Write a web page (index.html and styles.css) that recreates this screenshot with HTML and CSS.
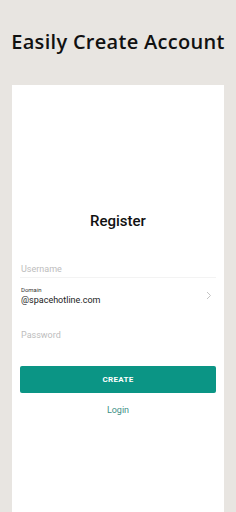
FILE: index.html
```html
<!DOCTYPE html>
<html lang="en">
<head>
  <meta charset="UTF-8">
  <meta name="viewport" content="width=device-width, initial-scale=1.0">
  <title>Easily Create Account</title>
  <link rel="stylesheet" href="styles.css">
</head>
<body>
  <div class="page">
    <header class="top">
      <h1 class="title">Easily Create Account</h1>
    </header>
    <main class="card">
      <h2 class="heading">Register</h2>
      <div class="form">
        <!-- Username -->
        <div class="field field-user">
          <span class="placeholder">Username</span>
        </div>
        <!-- Domain picker -->
        <div class="field field-domain">
          <div class="domain-text">
            <span class="small-label">Domain</span>
            <span class="value">@spacehotline.com</span>
          </div>
          <svg class="chevron" width="6" height="9" viewBox="0 0 6 9">
            <path d="M1 1 L4.5 4.5 L1 8" fill="none" stroke="#c4c4c4" stroke-width="1"/>
          </svg>
        </div>
        <!-- Password -->
        <div class="field field-pass">
          <span class="placeholder">Password</span>
        </div>
      </div>
      <button class="create-btn">CREATE</button>
      <a class="login-link" href="#">Login</a>
    </main>
  </div>
</body>
</html>
```

FILE: styles.css
```css
/* Page base */
html, body {
  margin: 0;
  padding: 0;
  height: 100%;
  background-color: #e8e5e1;
}

.page {
  display: flex;
  flex-direction: column;
  height: 100%;
}

/* Header title */
.top {
  height: 85px;
  display: flex;
  justify-content: center;
  padding-top: 28px;
  box-sizing: border-box;
}

.title {
  margin: 0;
  font-family: "Open Sans", sans-serif;
  font-weight: 600;
  font-size: 20px;
  line-height: 28px;
  color: #111;
  letter-spacing: 0.3px;
  white-space: nowrap;
}

/* White card */
.card {
  flex-grow: 1;
  margin: 0 12px;
  background-color: #fff;
  display: flex;
  flex-direction: column;
  padding: 0 8px;
  font-family: Roboto, sans-serif;
}

.heading {
  margin: 126px 0 0 0;
  text-align: center;
  font-size: 15px;
  font-weight: 500;
  line-height: 20px;
  color: #111;
}

.form {
  margin-top: 29px;
  display: flex;
  flex-direction: column;
}

.field {
  display: flex;
  align-items: center;
  padding: 0 1px;
}

.field-user {
  height: 17px;
  border-bottom: 1px solid #f3f3f3;
}

.field-domain {
  margin-top: 7px;
  justify-content: space-between;
}

.field-pass {
  margin-top: 21px;
  height: 16px;
}

.placeholder {
  font-size: 9px;
  color: #bdbdbd;
}

.domain-text {
  display: flex;
  flex-direction: column;
}

.small-label {
  font-size: 6px;
  color: #333;
  line-height: 9px;
}

.value {
  font-size: 9px;
  color: #222;
  line-height: 12px;
}

.chevron {
  margin-right: 3px;
}

/* Create button */
.create-btn {
  margin-top: 23px;
  height: 27px;
  border: none;
  border-radius: 2px;
  background-color: #0b9585;
  color: #fff;
  font-family: Roboto, sans-serif;
  font-weight: 700;
  font-size: 8px;
  letter-spacing: 0.3px;
}

.login-link {
  margin-top: 12px;
  text-align: center;
  font-size: 9px;
  color: #3e8f86;
  text-decoration: none;
}
```
